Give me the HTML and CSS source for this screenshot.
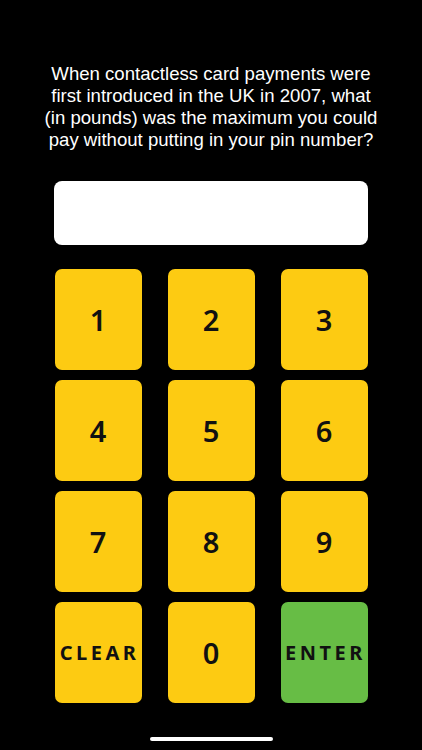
FILE: index.html
```html
<!DOCTYPE html>
<html lang="en">
<head>
    <meta charset="UTF-8">
    <meta name="viewport" content="width=device-width, initial-scale=1.0">
    <title>Quiz</title>
    <link rel="stylesheet" href="styles.css">
</head>
<body>
    <div class="screen">
        <p class="question">When contactless card payments were first introduced in the UK in 2007, what (in pounds) was the maximum you could pay without putting in your pin number?</p>
        <div class="answer-box"></div>
        <div class="keypad">
            <button class="key">1</button>
            <button class="key">2</button>
            <button class="key">3</button>
            <button class="key">4</button>
            <button class="key">5</button>
            <button class="key">6</button>
            <button class="key">7</button>
            <button class="key">8</button>
            <button class="key">9</button>
            <button class="key key-word">CLEAR</button>
            <button class="key">0</button>
            <button class="key key-word key-enter">ENTER</button>
        </div>
        <div class="home-bar"></div>
    </div>
</body>
</html>
```

FILE: styles.css
```css
body {
    margin: 0;
    background: #000;
    font-family: "Liberation Sans", Arial, sans-serif;
}

.screen {
    width: 422px;
    height: 750px;
    display: flex;
    flex-direction: column;
    align-items: center;
    box-sizing: border-box;
    padding-top: 63px;
}

.question {
    margin: 0;
    width: 336px;
    color: #fff;
    font-size: 18.6px;
    line-height: 22px;
    text-align: center;
}

.answer-box {
    width: 314px;
    height: 64px;
    margin-top: 30px;
    background: #fff;
    border-radius: 8px;
}

.keypad {
    width: 313px;
    margin-top: 24px;
    display: grid;
    grid-template-columns: repeat(3, 87px);
    grid-auto-rows: 101px;
    column-gap: 26px;
    row-gap: 10px;
}

.key {
    border: none;
    border-radius: 7px;
    background: #fdcb12;
    color: #111;
    font-family: "Noto Sans", "DejaVu Sans", sans-serif;
    font-weight: 600;
    font-size: 29px;
    padding: 0;
}

.key-word {
    font-size: 20px;
    font-weight: 700;
    letter-spacing: 3.5px;
    padding-left: 3px;
}

.key-enter {
    background: #67bd45;
}

.home-bar {
    width: 123px;
    height: 4px;
    margin-top: 34px;
    background: #fff;
    border-radius: 2px;
}
```
